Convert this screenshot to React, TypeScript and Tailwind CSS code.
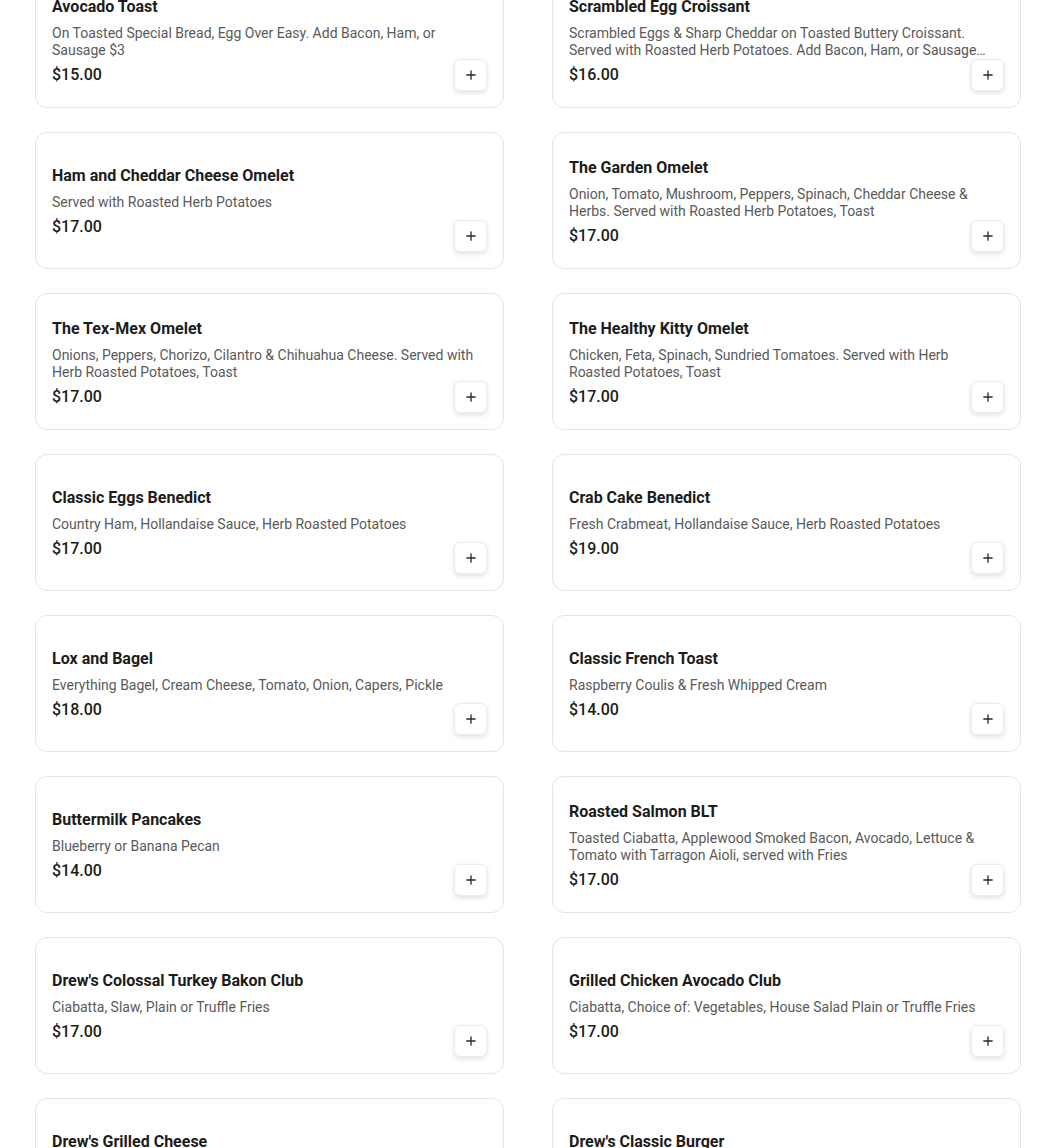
import React from "react";

type Item = { name: string; desc: string; price: string };

const items: Item[] = [
   {
      name: "Avocado Toast",
      desc: "On Toasted Special Bread, Egg Over Easy. Add Bacon, Ham, or Sausage $3",
      price: "$15.00",
   },
   {
      name: "Scrambled Egg Croissant",
      desc: "Scrambled Eggs & Sharp Cheddar on Toasted Buttery Croissant. Served with Roasted Herb Potatoes. Add Bacon, Ham, or Sausage $3",
      price: "$16.00",
   },
   { name: "Ham and Cheddar Cheese Omelet", desc: "Served with Roasted Herb Potatoes", price: "$17.00" },
   {
      name: "The Garden Omelet",
      desc: "Onion, Tomato, Mushroom, Peppers, Spinach, Cheddar Cheese & Herbs. Served with Roasted Herb Potatoes, Toast",
      price: "$17.00",
   },
   {
      name: "The Tex-Mex Omelet",
      desc: "Onions, Peppers, Chorizo, Cilantro & Chihuahua Cheese. Served with Herb Roasted Potatoes, Toast",
      price: "$17.00",
   },
   {
      name: "The Healthy Kitty Omelet",
      desc: "Chicken, Feta, Spinach, Sundried Tomatoes. Served with Herb Roasted Potatoes, Toast",
      price: "$17.00",
   },
   { name: "Classic Eggs Benedict", desc: "Country Ham, Hollandaise Sauce, Herb Roasted Potatoes", price: "$17.00" },
   { name: "Crab Cake Benedict", desc: "Fresh Crabmeat, Hollandaise Sauce, Herb Roasted Potatoes", price: "$19.00" },
   { name: "Lox and Bagel", desc: "Everything Bagel, Cream Cheese, Tomato, Onion, Capers, Pickle", price: "$18.00" },
   { name: "Classic French Toast", desc: "Raspberry Coulis & Fresh Whipped Cream", price: "$14.00" },
   { name: "Buttermilk Pancakes", desc: "Blueberry or Banana Pecan", price: "$14.00" },
   {
      name: "Roasted Salmon BLT",
      desc: "Toasted Ciabatta, Applewood Smoked Bacon, Avocado, Lettuce & Tomato with Tarragon Aioli, served with Fries",
      price: "$17.00",
   },
   { name: "Drew's Colossal Turkey Bakon Club", desc: "Ciabatta, Slaw, Plain or Truffle Fries", price: "$17.00" },
   {
      name: "Grilled Chicken Avocado Club",
      desc: "Ciabatta, Choice of: Vegetables, House Salad Plain or Truffle Fries",
      price: "$17.00",
   },
   { name: "Drew's Grilled Cheese", desc: "Ciabatta, Plain or Truffle Fries", price: "$16.00" },
   { name: "Drew's Classic Burger", desc: "Lettuce, Tomato, Onion, Pickle, Plain or Truffle Fries", price: "$18.00" },
];

const PlusIcon = () => (
   <svg width="10" height="10" viewBox="0 0 12 12" fill="none">
      <path d="M6 1v10M1 6h10" stroke="#2a2a2a" strokeWidth="1.6" strokeLinecap="round" />
   </svg>
);

const MenuCard = ({ item }: { item: Item }) => (
   <div className="relative h-[137px] rounded-xl border border-[#e4e4e4] bg-white px-4 pt-1 flex items-center">
      <div className="w-full pr-3">
         <h3 className="text-[16px] leading-5 font-bold text-[#1c1c1c]">{item.name}</h3>
         <p className="mt-2 text-[14px] leading-[17px] text-[#5a5a5a] line-clamp-2">{item.desc}</p>
         <div className="mt-1 text-[16px] leading-6 font-medium text-[#1c1c1c]">{item.price}</div>
      </div>
      <button className="absolute right-4 bottom-4 w-[33px] h-8 flex items-center justify-center rounded-md bg-white border border-[#ececec] shadow-[0_2px_5px_rgba(0,0,0,0.12)]">
         <PlusIcon />
      </button>
   </div>
);

export default function App() {
   return (
      <div className="min-h-screen bg-white overflow-hidden" style={{ fontFamily: "Roboto, 'Liberation Sans', sans-serif" }}>
         {/* menu grid, scrolled into view */}
         <div className="-mt-[29px] ml-[35px] w-[986px] grid grid-cols-2 gap-x-12 gap-y-6">
            {items.map((item) => (
               <MenuCard key={item.name} item={item} />
            ))}
         </div>
      </div>
   );
}
